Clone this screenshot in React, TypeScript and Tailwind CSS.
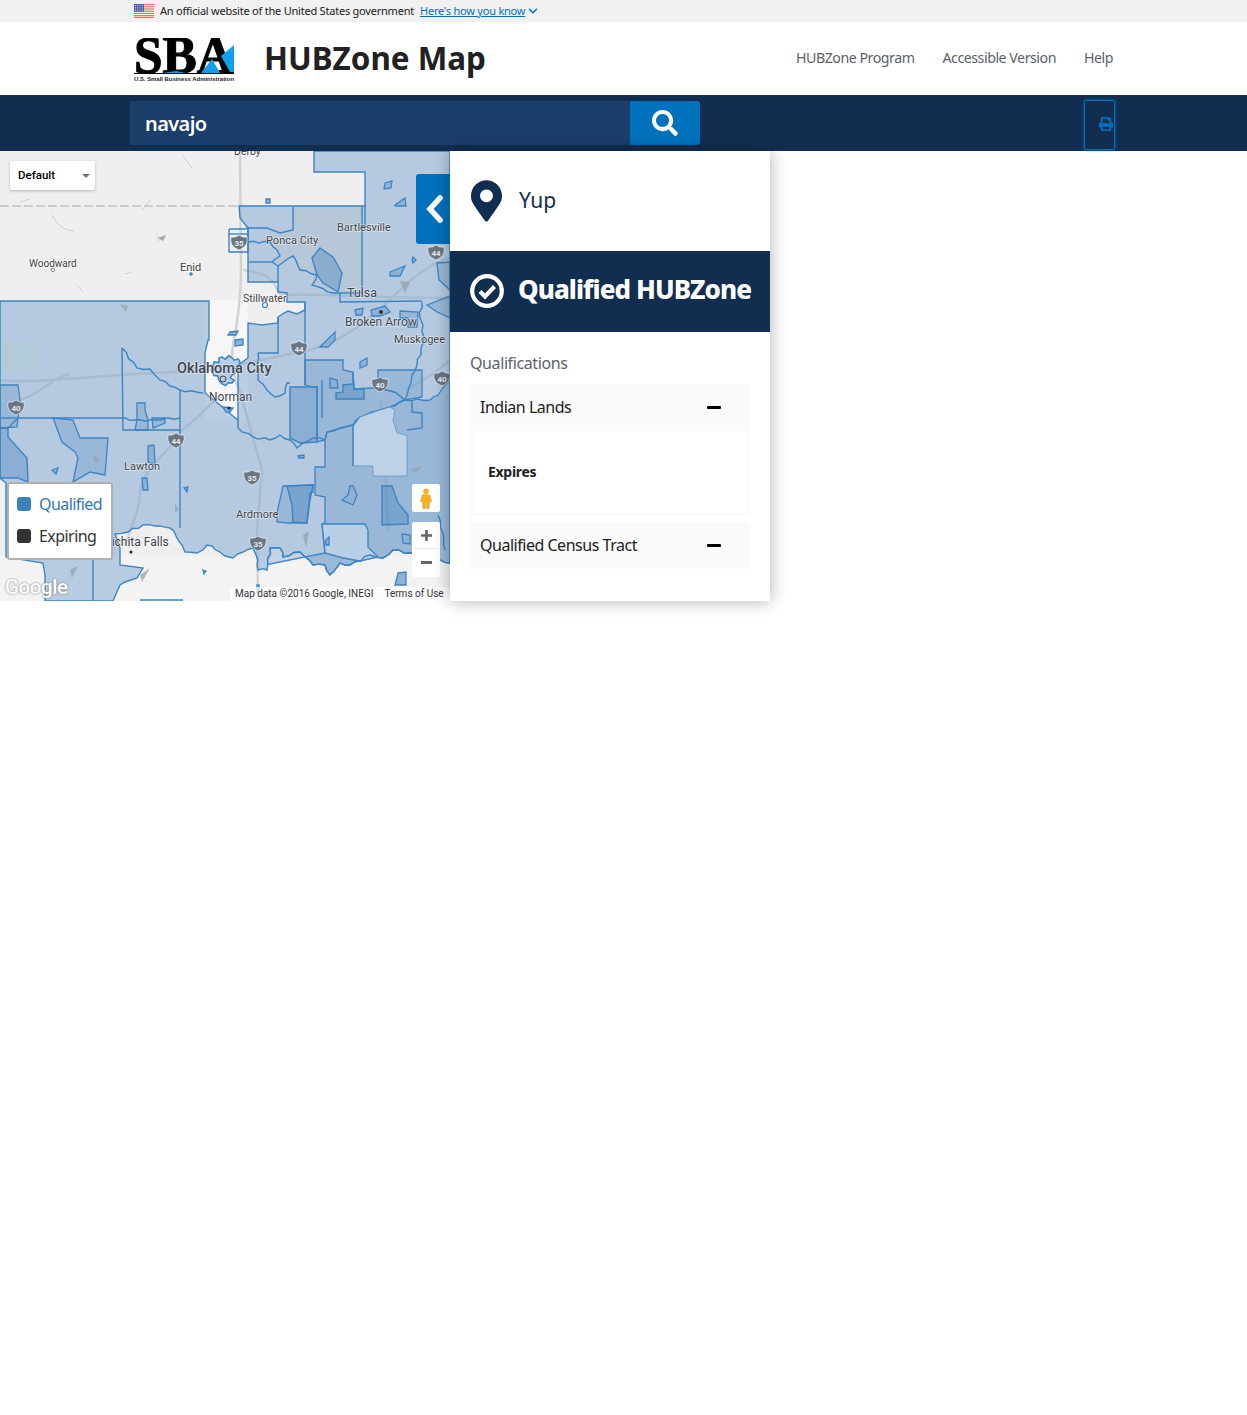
import React from "react";
import { FaMapMarkerAlt, FaSearch, FaPrint } from "react-icons/fa";
import { FiChevronDown } from "react-icons/fi";

const sans = "font-['Noto_Sans',sans-serif]";
const roboto = "font-['Roboto',sans-serif]";

// Turns a coarse river course into a wiggly one, with a fixed pattern.
function wig(points: string, amp = 1.3, step = 6) {
  const pts = points.split(" ").map((p) => p.split(",").map(Number));
  const out: string[] = [];
  let k = 0;
  for (let i = 0; i < pts.length - 1; i++) {
    const [x1, y1] = pts[i];
    const [x2, y2] = pts[i + 1];
    const len = Math.hypot(x2 - x1, y2 - y1);
    const n = Math.max(1, Math.round(len / step));
    for (let j = 0; j < n; j++) {
      const t = j / n;
      const a = j === 0 ? 0 : Math.sin(k * 2.3) * amp;
      k++;
      const nx = (y2 - y1) / (len || 1);
      const ny = (x1 - x2) / (len || 1);
      out.push(`${(x1 + (x2 - x1) * t + nx * a).toFixed(1)},${(y1 + (y2 - y1) * t + ny * a).toFixed(1)}`);
    }
  }
  out.push(pts[pts.length - 1].join(","));
  return out.join(" ");
}

const redRiver = wig(
  "450,563 440,560 425,555 410,553 393,550 383,558 370,555 350,565 340,563 330,575 325,565 313,565 300,552 283,557 280,548 270,548 267,570 258,570 256,555 253,548 243,552 233,558 225,556 220,552 212,546 207,545 197,553 185,552 182,545 176,536 170,528 155,526 143,525 128,532 115,534"
);

const outer = `0,301 209,301 209,340 208,340 205,353 205,393 220,405 228,412 238,420 238,365 248,358 248,323 262,325 278,323 278,317 284,313 288,311 297,314 305,310 305,302 287,302 287,293 278,292 278,282 248,282 248,228 240,218 239,206 365,206 365,172 314,172 314,151 450,151 ${redRiver} 120,548 120,565 143,568 137,578 125,582 120,585 113,601 45,601 45,575 43,563 6,557 6,483 0,478`;

const eastEdge = "325,440 327,432 353,425 360,417 377,411 390,407 405,400 430,400 438,395 448,382 450,382";
const medium = [
  `${wig(eastEdge, 1)} ${redRiver.split(" ").slice(0, 42).join(" ")} 325,553 322,524 325,523 325,497 315,495 315,467 325,467`,
  `305,360 343,360 343,370 353,372 354,389 373,388 378,388 395,392 405,400 390,407 377,411 360,417 353,425 327,432 325,440 317,442 317,387 ${wig("317,387 305,385", 1)}`,
  "378,370 422,370 422,397 405,400 395,392 378,388",
  "53,418 73,420 80,438 108,438 105,475 90,472 73,482 78,458 75,452 62,442",
  "0,385 18,385 20,400 17,427 0,428",
  "137,403 145,403 145,410 148,420 148,430 135,430 137,420",
  "152,418 165,418 165,423 153,428",
  "277,513 283,486 313,485 313,492 310,493 307,523 287,523 277,522",
  "427,305 450,296 450,318 437,312",
  "437,263 450,262 450,290 439,280",
  "400,311 418,312 417,327 408,327 408,318 400,318",
];

const light = "353,427 360,417 377,411 390,407 395,410 393,420 397,433 407,435 407,476 373,476 373,466 353,466";
const lightLow = "322,524 365,524 368,530 368,547 378,557 360,561 343,558 325,553";
const darker = [
  "0,428 8,428 8,437 27,458 28,482 18,478 0,478",
  "290,387 317,387 317,442 300,443 290,438",
  "382,486 392,486 398,503 408,515 408,524 382,525",
  "287,486 313,485 310,500 307,523 293,522 292,505",
  "320,248 333,257 342,273 338,292 323,283 317,275 312,258",
  "353,373 353,384 343,385 343,392 336,393 336,399 364,399 364,389 354,389",
];

const blobs = [
  "266,199 270,199 270,203 266,203",
  "230,332 238,331 236,335 228,335",
  "385,183 392,181 391,188 384,189",
  "395,205 405,198 406,206 395,206",
  "390,272 405,266 400,276 390,276",
  "413,257 416,260 413,263 412,259",
  "320,347 335,332 335,340 328,347",
  "360,362 367,358 367,365 360,368",
  "52,470 58,468 56,474",
  "148,446 154,445 155,465 148,462",
  "142,478 147,478 148,490 143,490",
  "184,488 188,487 187,492",
  "350,486 353,486 357,495 353,505 342,500 348,495",
  "402,534 410,535 410,544 403,543",
  "330,378 337,380 338,388 330,388",
  "223,407 233,408 230,412 226,412",
  "398,573 406,572 406,585 395,585",
  "371,310 385,306 390,312 380,316 372,316",
  "355,310 363,308 362,315 356,315",
  "235,340 243,339 243,345 235,346",
  "203,570 206,571 204,574",
  "257,585 259,585 259,592 257,592",
  "325,541 329,537 329,545 326,545",
  "298,456 304,455 304,458 299,458",
];

const lines = [
  "293,207 293,230 280,233 267,228 248,228",
  "229,229 245,229 248,228 248,252 229,252 229,229",
  "229,234 248,234",
  wig("248,242 270,242 277,250 280,256 272,262 278,266 293,256 300,270 317,275 312,285 333,293", 1),
  "333,293 362,293 362,206",
  "248,262 272,262",
  "278,265 278,282",
  "340,293 340,302 422,301",
  "305,302 305,385",
  "278,317 278,353 258,353",
  wig("258,353 258,380 267,390 275,397 285,393 287,383 290,383", 1),
  wig("122,348 137,368 150,369 160,380 180,390 203,393", 1.1),
  "122,348 123,430 180,430 180,390",
  "0,418 18,418",
  "18,418 8,428",
  "18,418 120,418",
  wig("120,418 135,420 150,420 180,418", 1.1),
  "180,430 180,528",
  wig("238,420 238,428 253,437 270,440 280,435 290,440 297,448 313,438 325,440", 1.3),
  "322,380 322,418",
  "365,206 365,230",
  "140,600 183,600",
  "93,558 93,601",
  wig("422,302 420,318 423,325 423,343 417,365 412,375 407,395 405,400", 1.2),
  "412,400 412,412 422,413 422,428 407,430",
  "353,466 353,425",
  wig("438,515 443,533 445,550", 1),
];

const roads = [
  "M240 151 C240 180 241 240 241 270 C241 300 238 320 233 345 C231 360 232 375 240 392 L262 470 L257 530 L258 600",
  "M0 380 C30 385 130 372 180 372 C210 372 250 362 300 352 C340 345 370 320 400 290 C420 270 440 260 450 258",
  "M243 270 C260 272 272 275 280 295 C320 293 380 298 450 298",
  "M20 400 C40 395 50 378 70 374",
  "M175 440 C160 460 145 470 140 490 C140 510 130 530 125 545",
  "M180 432 C195 420 205 410 215 400",
  "M380 400 C385 430 385 470 388 530",
  "M405 390 C425 380 440 370 450 360",
];

const gray = [
  "120,304 128,306 126,312",
  "400,281 410,282 405,293",
  "175,503 179,510 175,513",
  "303,535 309,531 306,548",
  "100,460 95,463 93,455",
  "70,570 78,566 72,578",
  "140,575 150,568 142,582",
  "410,470 422,466 416,473",
];

function Shield({ x, y, n }: { x: number; y: number; n: string }) {
  return (
    <g transform={`translate(${x - 8} ${y - 7})`}>
      <path d="M0 2 Q4 3 8 0 Q12 3 16 2 C17 8 15 12 8 15 C1 12 -1 8 0 2Z" fill="#6b7684" stroke="#fff" strokeWidth="0.6" />
      <text x="8" y="11" textAnchor="middle" fontSize="8" fontWeight="700" fill="#e6e8eb" className={roboto}>{n}</text>
    </g>
  );
}

function Label({ x, y, t, size = 11 }: { x: number; y: number; t: string; size?: number }) {
  return (
    <text
      x={x}
      y={y}
      fontSize={size}
      fontWeight={size > 14 ? 500 : 400}
      fill="#3f444b"
      stroke="#ffffff"
      strokeOpacity="0.5"
      strokeWidth="1.5"
      paintOrder="stroke"
      className={roboto}
    >
      {t}
    </text>
  );
}

function MapDrawing() {
  return (
    <svg viewBox="0 151 450 450" className="w-[450px] h-[450px] block">
      <rect x="0" y="151" width="450" height="450" fill="#efefef" />
      <polygon points="205,300 248,300 248,420 205,420" fill="#f6f6f6" />
      <polygon points="0,556 450,556 450,601 0,601" fill="#f3f3f3" />
      <path d="M0 206 H239" stroke="#a8a8a8" strokeWidth="1" strokeDasharray="9 3" fill="none" />
      <path d="M52 215 C58 225 62 230 74 231 M142 210 L150 200 M183 156 L192 168 M77 285 L83 292 M125 274 L132 272 M20 202 L30 199" stroke="#cfcfcf" strokeWidth="1" fill="none" />
      <polygon points="155,232 162,238 158,243" fill="#dfe9d8" />
      <polygon points="158,238 166,235 163,241" fill="#a7a7a7" />
      {roads.map((d) => (
        <path key={d} d={d} stroke="#d2d2d2" strokeWidth="2.5" fill="none" />
      ))}
      <polygon points={outer} fill="#7ca6d2" fillOpacity="0.5" />
      <polygon points="293,207 362,207 362,293 333,293 312,285 317,275 300,270 293,256 278,266 272,262 280,256 277,250 270,242 267,228 280,233 293,230" fill="#b6c7d7" />
      <polygon points="0,340 40,342 38,370 14,372 0,368" fill="#aecbcf" opacity="0.45" />
      {medium.map((p) => (
        <polygon key={p} points={p} fill="#5b8fc4" fillOpacity="0.3" stroke="#3d84c0" strokeWidth="1.3" />
      ))}
      <polygon points={light} fill="#bed2e7" stroke="#3d84c0" strokeWidth="0.8" strokeOpacity="0.7" />
      <polygon points={lightLow} fill="#b9cfe5" stroke="#3d84c0" strokeWidth="1.4" />
      {darker.map((p) => (
        <polygon key={p} points={p} fill="#3d7fbd" fillOpacity="0.35" stroke="#3d84c0" strokeWidth="1.4" />
      ))}
      {lines.map((p) => (
        <polyline key={p} points={p} fill="none" stroke="#3d84c0" strokeWidth="1.4" />
      ))}
      <polygon points={outer} fill="none" stroke="#3d84c0" strokeWidth="1.4" />
      <polygon
        points={wig("213,365 222,357 232,358 240,362 232,375 232,383 222,384 218,376 212,372 213,365", 2.2, 3)}
        fill="#b7cde3"
        stroke="#3d84c0"
        strokeWidth="1.5"
      />
      {blobs.map((p) => (
        <polygon key={p} points={p} fill="#8eb1d6" stroke="#3d84c0" strokeWidth="1.3" />
      ))}
      {gray.map((p) => (
        <polygon key={p} points={p} fill="#97a2ad" fillOpacity="0.75" />
      ))}
      <Shield x={239} y={242} n="35" />
      <Shield x={436} y={252} n="44" />
      <Shield x={299} y={348} n="44" />
      <Shield x={380} y={384} n="40" />
      <Shield x={16} y={407} n="40" />
      <Shield x={176} y={440} n="44" />
      <Shield x={252} y={477} n="35" />
      <Shield x={258} y={543} n="35" />
      <Shield x={442} y={378} n="40" />
      <Label x={234} y={155} t="Derby" size={10.5} />
      <Label x={337} y={231} t="Bartlesville" />
      <Label x={266} y={244} t="Ponca City" />
      <Label x={29} y={267} t="Woodward" size={10} />
      <Label x={180} y={271} t="Enid" />
      <Label x={243} y={302} t="Stillwater" size={10.5} />
      <Label x={347} y={297} t="Tulsa" size={12.5} />
      <Label x={345} y={326} t="Broken Arrow" size={12} />
      <Label x={394} y={343} t="Muskogee" size={11} />
      <Label x={177} y={373} t="Oklahoma City" size={14.5} />
      <Label x={209} y={401} t="Norman" size={12} />
      <Label x={124} y={470} t="Lawton" />
      <Label x={236} y={518} t="Ardmore" />
      <Label x={101} y={546} t="Wichita Falls" size={12} />
      <circle cx="53" cy="270" r="1.6" fill="#fff" stroke="#555" strokeWidth="0.7" />
      <circle cx="191" cy="274" r="1.8" fill="#3d84c0" />
      <circle cx="265" cy="305" r="2.5" fill="none" stroke="#3d84c0" strokeWidth="1.2" />
      <circle cx="381" cy="312" r="2" fill="#333" />
      <circle cx="229" cy="408" r="1.6" fill="#222" />
      <circle cx="223" cy="379" r="3" fill="none" stroke="#3f444b" strokeWidth="1" />
      <circle cx="131" cy="552" r="1.5" fill="#222" />
    </svg>
  );
}

function Flag() {
  return (
    <svg width="20" height="14" viewBox="0 0 20 14" className="block">
      <rect width="20" height="14" fill="#fff" />
      {[0, 2.2, 4.4, 6.6, 8.8, 11].map((y) => (
        <rect key={y} y={y} width="20" height="1.2" fill="#e2715f" />
      ))}
      <rect y="12.8" width="20" height="1.2" fill="#e2715f" />
      <rect width="10" height="7.6" fill="#4b5fa8" />
      {[1.5, 3.8, 6].map((y) =>
        [1.5, 3.8, 6.1, 8.4].map((x) => <circle key={`${x}-${y}`} cx={x} cy={y} r="0.6" fill="#dfe3f2" />)
      )}
    </svg>
  );
}

function SbaLogo() {
  return (
    <svg width="100" height="44" viewBox="0 0 100 44" className="block">
      <text
        x="0"
        y="35"
        fontSize="53"
        fontWeight="700"
        textLength="100"
        lengthAdjust="spacingAndGlyphs"
        fill="#000"
        stroke="#000"
        strokeWidth="1.1"
        className="font-['Liberation_Serif',serif]"
      >
        SBA
      </text>
      <polygon points="100,7 100,34 96,34 87,18" fill="#11a0ea" />
      <polygon points="67,35 86,35 78,21" fill="#11a0ea" />
      <polygon points="28,35 52,35 42,33" fill="#11a0ea" />
      <rect y="35" width="100" height="1" fill="#000" />
      <text x="0" y="43" fontSize="5.2" fontWeight="700" textLength="100" lengthAdjust="spacingAndGlyphs" fill="#222" className="font-['Liberation_Sans',sans-serif]">
        U.S. Small Business Administration
      </text>
    </svg>
  );
}

function Minus() {
  return <span className="block w-[14px] h-[3px] rounded-[1px] bg-black" />;
}

export default function App() {
  return (
    <div className={`min-h-[1415px] bg-white ${sans}`}>
      <div className="h-[22px] bg-[#f1f1f1] flex items-center pl-[134px] text-[11px] tracking-[-0.02em] text-[#212121]">
        <Flag />
        <span className="ml-[6px]">An official website of the United States government</span>
        <a className="ml-[6px] text-[#0071bc] underline">Here's how you know</a>
        <FiChevronDown className="ml-[1px] text-[#0071bc] w-[14px] h-[14px] [stroke-width:2.5]" />
      </div>

      <header className="h-[73px] flex items-center pl-[134px] pr-[134px]">
        <div className="pt-[2px]">
          <SbaLogo />
        </div>
        <h1 className="ml-[30px] text-[31.4px] leading-none font-bold text-[#212121] -mt-[1px]">HUBZone Map</h1>
        <nav className="ml-auto flex gap-[28px] text-[14.2px] tracking-[-0.033em] text-[#5b616b] pb-[2px]">
          <a>HUBZone Program</a>
          <a>Accessible Version</a>
          <a>Help</a>
        </nav>
      </header>

      <div className="h-[56px] bg-[#112e51] pl-[130px] pr-[132px] flex items-center">
        <div className="w-[500px] h-[44px] bg-[#1c3e6b] flex items-center pl-[15px] pt-[1px] text-[20px] font-semibold text-white tracking-[-0.03em]">
          navajo
        </div>
        <button className="w-[70px] h-[44px] bg-[#0071bc] rounded-r-[3px] flex items-center justify-center">
          <FaSearch className="w-[26px] h-[26px] text-white" />
        </button>
        <button className="ml-auto self-end mb-[1px] w-[31px] h-[50px] rounded-[2px] border border-[#0071bc] shadow-[0_0_3px_#0071bc] flex items-center justify-end overflow-visible">
          <FaPrint className="w-[14px] h-[14px] text-[#0071bc] mr-[1px] -mt-[3px]" />
        </button>
      </div>

      <main className="flex items-start">
        <div className="relative w-[450px] h-[450px] overflow-hidden">
          <MapDrawing />

          <div className={`absolute left-[10px] top-[10px] w-[85px] h-[29px] bg-white rounded-[2px] shadow-[0_1px_3px_rgba(0,0,0,0.25)] flex items-center pl-[8px] pr-[5px] text-[11.5px] font-medium text-black ${roboto}`}>
            Default
            <span className="ml-auto w-0 h-0 border-x-[4px] border-x-transparent border-t-[4px] border-t-[#777]" />
          </div>

          <button className="absolute left-[416px] top-[23px] w-[34px] h-[70px] bg-[#0071bc] rounded-l-[3px] flex items-center justify-center pl-[2px]">
            <svg width="18" height="28" viewBox="0 0 18 28">
              <path d="M15 3 L5 14 L15 25" fill="none" stroke="#fff" strokeWidth="5.5" strokeLinecap="square" />
            </svg>
          </button>

          <div className="absolute left-[7px] top-[331px] w-[106px] h-[78px] bg-white border-2 border-[#b0b0b0] rounded-[3px] pl-[8px] pt-[4px] text-[16px] tracking-[-0.035em]">
            <div className="flex items-center h-[32px] gap-[8px] text-[#2e78b7]">
              <span className="w-[14px] h-[14px] rounded-[3px] bg-[#3b82bd]" />
              Qualified
            </div>
            <div className="flex items-center h-[32px] gap-[8px] text-[#333]">
              <span className="w-[14px] h-[14px] rounded-[3px] bg-[#333]" />
              Expiring
            </div>
          </div>

          <div className="absolute left-[412px] top-[333px] w-[28px] h-[28px] bg-white rounded-[2px] flex items-center justify-center">
            <svg width="12" height="21" viewBox="0 0 12 21">
              <circle cx="6" cy="3.2" r="2.8" fill="#f5b21e" />
              <path d="M2.4 6.8 H9.6 L11.5 13.5 H9.6 L9 20.5 H6.6 V14 H5.4 V20.5 H3 L2.4 13.5 H0.5Z" fill="#f5b21e" stroke="#c98a10" strokeWidth="0.5" />
            </svg>
          </div>

          <div className="absolute left-[412px] top-[371px] w-[28px] h-[55px] bg-white rounded-[2px] flex flex-col items-center">
            <div className="h-[27px] w-[22px] border-b border-[#e6e6e6] flex items-center justify-center">
              <svg width="11" height="11" viewBox="0 0 11 11"><path d="M4.2 0H6.8V4.2H11V6.8H6.8V11H4.2V6.8H0V4.2H4.2Z" fill="#666" /></svg>
            </div>
            <div className="h-[27px] flex items-center justify-center">
              <span className="block w-[11px] h-[2.5px] bg-[#666]" />
            </div>
          </div>

          <div className={`absolute left-[5px] top-[426px] text-[20.5px] font-medium leading-none text-white [text-shadow:0_0_2px_rgba(90,90,90,0.9)] tracking-[-0.02em] ${roboto}`}>
            Google
          </div>

          <div className={`absolute right-0 bottom-0 h-[14px] w-[220px] bg-white/70 flex items-center pl-[5px] pb-[1px] text-[10px] text-[#333] ${roboto}`}>
            <span>Map data ©2016 Google, INEGI</span>
            <span className="ml-[11px]">Terms of Use</span>
          </div>
        </div>

        <aside className="relative w-[320px] h-[450px] bg-white shadow-[0_0_16px_rgba(0,0,0,0.32)]">
          <div className="h-[100px] flex items-center pl-[21px] text-[#112e51]">
            <FaMapMarkerAlt className="w-[31px] h-[42px]" />
            <span className="ml-[17px] text-[21px]">Yup</span>
          </div>
          <div className="h-[81px] bg-[#112e51] flex items-center pl-[20px] text-white">
            <svg width="34" height="34" viewBox="0 0 34 34" className="block -mt-[2px]">
              <circle cx="17" cy="17" r="14.8" fill="none" stroke="#fff" strokeWidth="4.2" />
              <path d="M10 17.5 L15 22.5 L24.5 12.5" fill="none" stroke="#fff" strokeWidth="4.2" />
            </svg>
            <span className="ml-[14px] -mt-[4px] text-[26px] font-extrabold tracking-[-0.036em] whitespace-nowrap">Qualified HUBZone</span>
          </div>
          <div className="px-[20px] pt-[21px]">
            <div className="h-[20px] flex items-center text-[16px] tracking-[-0.025em] text-[#5b616b]">Qualifications</div>
            <div className="mt-[11px] h-[47px] bg-[#fafafa] flex items-center justify-between pl-[10px] pr-[29px] text-[16px] tracking-[-0.03em] text-[#212121]">
              <span className="-mt-[2px]">Indian Lands</span>
              <Minus />
            </div>
            <div className="h-[85px] border-[3px] border-t-0 border-[#fafafa] flex items-center pl-[15px] pb-[2px] text-[14px] tracking-[-0.02em] font-bold text-[#212121]">
              Expires
            </div>
            <div className="mt-[6px] h-[47px] bg-[#fafafa] flex items-center justify-between pl-[10px] pr-[29px] text-[16px] tracking-[-0.03em] text-[#212121]">
              <span className="-mt-[2px]">Qualified Census Tract</span>
              <Minus />
            </div>
          </div>
        </aside>
      </main>
    </div>
  );
}
